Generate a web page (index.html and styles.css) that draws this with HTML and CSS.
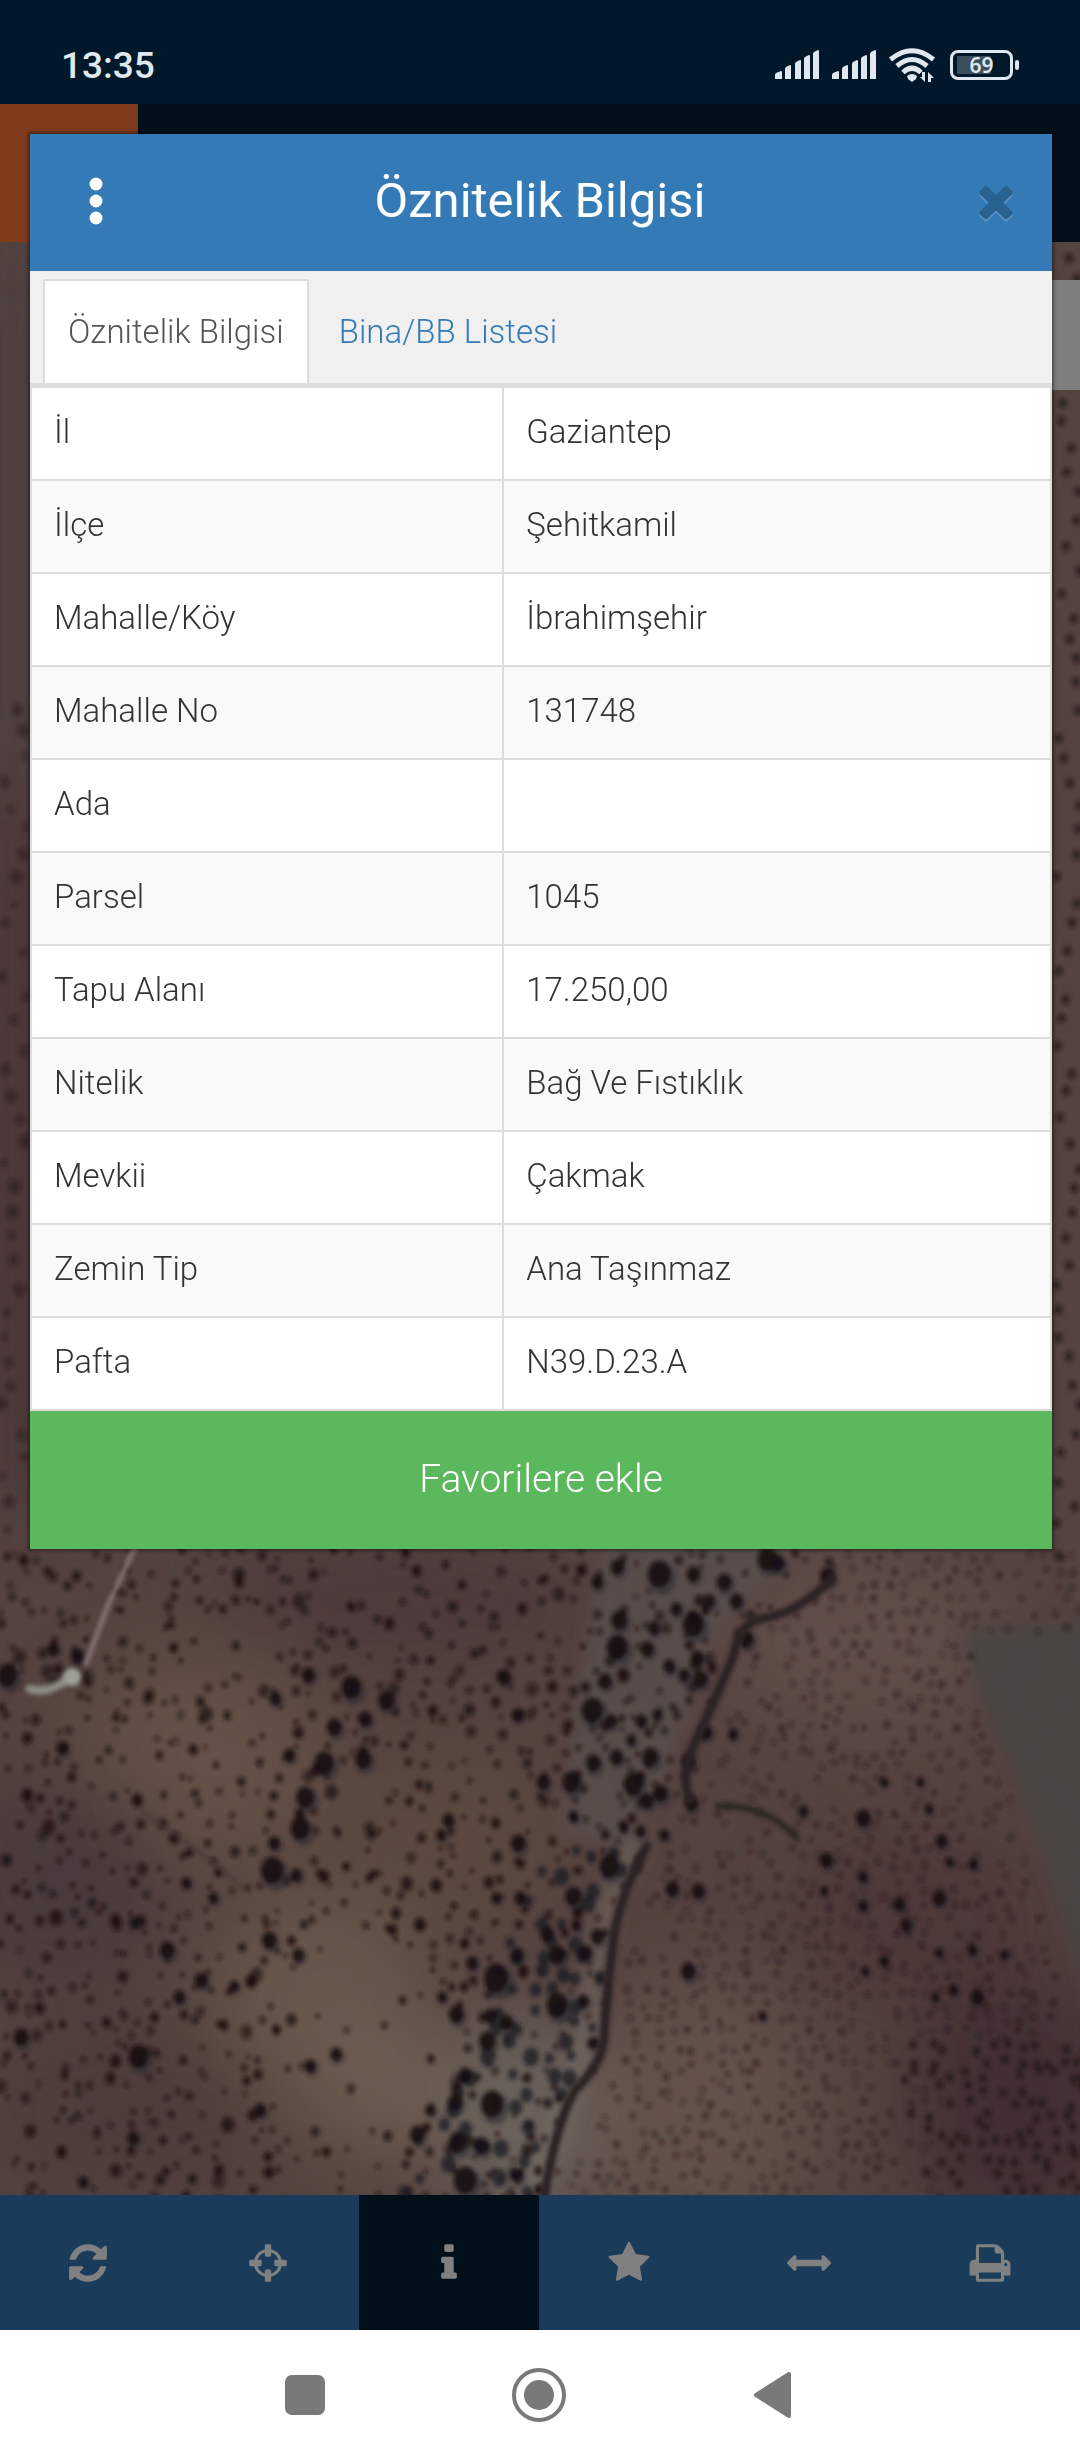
FILE: index.html
```html
<!DOCTYPE html>
<html lang="tr">
    <head>
        <meta charset="utf-8">
        <meta name="viewport" content="width=device-width, initial-scale=1">
        <title>Öznitelik Bilgisi</title>
        <link rel="stylesheet" href="styles.css">
    </head>

    <body>
        <div class="statusbar">
            <span class="clock">13:35</span>
            <div class="status-icons">
                <svg class="signal" viewBox="0 0 44 30">
                    <path d="M0 29v-4q0-1 1-2l5-2q1 0 1 1v7zM10 29V19q0-1 1-2l4-2q1 0 1 1v13zM20 29V14q0-1 1-2l4-2q1 0 1 1v18zM29 29V9q0-1 1-2l4-2q1 0 1 1v23zM38 29V4q0-1 1-2l4-2q1 0 1 1v28z" />
                </svg>
                <svg class="signal" viewBox="0 0 44 30">
                    <path d="M0 29v-4q0-1 1-2l5-2q1 0 1 1v7zM10 29V19q0-1 1-2l4-2q1 0 1 1v13zM20 29V14q0-1 1-2l4-2q1 0 1 1v18zM29 29V9q0-1 1-2l4-2q1 0 1 1v23zM38 29V4q0-1 1-2l4-2q1 0 1 1v28z" />
                </svg>
                <svg class="wifi" viewBox="0 0 46 36">
                    <g fill="none" stroke="#dfe8f0" stroke-width="5">
                        <path d="M1.500 12.500Q23-5 44.500 12.500" />
                        <path d="M8 19Q23 6 38 19" />
                        <path d="M14 25.500Q23 17 32 25.500" />
                    </g>
                    <path d="M18 29q5-4 10 0l-1 3-4 3-4-3zM36 25v10l-5-5h2v-5zM39 35V25l6 6h-3v4z" />
                </svg>
                <div class="battery"><span>69</span></div>
            </div>
        </div>

        <div class="app">
            <div class="topbar">
                <div class="logo"></div>
            </div>

            <svg class="map" viewBox="0 242 1080 1953" preserveAspectRatio="xMidYMax slice">
                <defs>
                    <filter id="haze" x="-50%" y="-50%" width="200%" height="200%">
                        <feGaussianBlur stdDeviation="40" />
                    </filter>
                    <filter id="soft">
                        <feGaussianBlur stdDeviation="2" />
                    </filter>
                    <filter id="softer">
                        <feGaussianBlur stdDeviation="8" />
                    </filter>
                </defs>
                <rect y="242" width="1080" height="1953" fill="#54433f" />
                <g filter="url(#haze)">
                    <rect y="242" width="60" height="550" fill="#473d3c" />
                    <rect y="800" width="60" height="700" fill="#452f31" />
                    <ellipse cx="200" cy="1760" rx="130" ry="100" fill="#655147" />
                    <ellipse cx="320" cy="2000" rx="110" ry="110" fill="#66564c" />
                    <ellipse cx="380" cy="2080" rx="70" ry="80" fill="#6c5b50" />
                    <ellipse cx="60" cy="1880" rx="110" ry="110" fill="#483a3b" />
                    <ellipse cx="400" cy="1600" rx="190" ry="60" fill="#4d3a3a" />
                    <ellipse cx="450" cy="1840" rx="110" ry="80" fill="#5c4841" />
                    <ellipse cx="120" cy="2110" rx="150" ry="90" fill="#4d3c3b" />
                    <ellipse cx="520" cy="2120" rx="80" ry="110" fill="#6a625b" />
                    <ellipse cx="860" cy="1640" rx="140" ry="90" fill="#604d48" />
                    <ellipse cx="700" cy="2110" rx="110" ry="130" fill="#63514c" />
                    <ellipse cx="920" cy="1920" rx="130" ry="90" fill="#4d3738" />
                    <ellipse cx="1020" cy="2110" rx="110" ry="130" fill="#422f32" />
                </g>
                <g filter="url(#softer)">
                    <path d="M960 1630L1100 1620V2030L1066 1930 1040 1850 1008 1760 980 1700z" fill="#484341" opacity=".8" />
                    <path d="M640 1840Q600 1900 590 2000 585 2070 530 2200" fill="none" stroke="#77706a" stroke-width="22" opacity=".5" />
                    <path d="M600 1545H800L720 1625 660 1790 620 1850 560 1830z" fill="#59514e" opacity=".7" />
                </g>
                <g id="trees" filter="url(#soft)"></g>
                <g filter="url(#soft)" fill="none" stroke-linecap="round">
                    <path d="M136 1545L108 1605 86 1664" stroke="#857573" stroke-width="5" />
                    <path d="M30 1689Q50 1695 70 1677" stroke="#8c8a82" stroke-width="9" />
                    <circle cx="72" cy="1677" r="9" fill="#9ea097" />
                    <path d="M832 1578Q800 1612 765 1618 738 1622 734 1655 715 1700 694 1745 680 1775 690 1800" stroke="#2c2122" stroke-width="9" />
                    <path d="M647 1846Q622 1890 614 1935 606 2000 604 2040 601 2065 575 2090 555 2125 544 2200" stroke="#2b2022" stroke-width="9" />
                    <path d="M718 1806Q765 1804 797 1838" stroke="#2c2524" stroke-width="6" />
                    <path d="M140 1810Q200 1850 245 1890" stroke="#463737" stroke-width="3" />
                </g>
            </svg>

            <div class="side-panel"></div>

            <nav class="toolbar">
                <button type="button" aria-label="Yenile">
                    <svg viewBox="0 0 1792 1792"><path d="M1639 1056q0 5-1 7-64 268-268 434.500t-478 166.500q-146 0-282.500-55t-243.500-157l-129 129q-19 19-45 19t-45-19-19-45v-448q0-26 19-45t45-19h448q26 0 45 19t19 45-19 45l-137 137q71 66 161 102t187 36q134 0 250-65t186-179q11-17 53-117 8-23 30-23h192q13 0 22.500 9.500t9.500 22.500zm25-800v448q0 26-19 45t-45 19h-448q-26 0-45-19t-19-45 19-45l138-138q-148-137-349-137-134 0-250 65t-186 179q-11 17-53 117-8 23-30 23h-199q-13 0-22.500-9.500t-9.500-22.500v-7q65-268 270-434.500t480-166.500q146 0 284 55.500t245 156.500l130-129q19-19 45-19t45 19 19 45z" /></svg>
                </button>
                <button type="button" aria-label="Konum">
                    <svg viewBox="0 0 1792 1792"><path d="M1325 1024h-109q-26 0-45-19t-19-45v-128q0-26 19-45t45-19h109q-32-108-112.500-188.500t-188.500-112.500v109q0 26-19 45t-45 19h-128q-26 0-45-19t-19-45v-109q-108 32-188.500 112.500t-112.500 188.500h109q26 0 45 19t19 45v128q0 26-19 45t-45 19h-109q32 108 112.500 188.500t188.500 112.500v-109q0-26 19-45t45-19h128q26 0 45 19t19 45v109q108-32 188.500-112.500t112.500-188.500zm339-192v128q0 26-19 45t-45 19h-143q-37 161-154.500 278.500t-278.500 154.500v143q0 26-19 45t-45 19h-128q-26 0-45-19t-19-45v-143q-161-37-278.500-154.500t-154.500-278.500h-143q-26 0-45-19t-19-45v-128q0-26 19-45t45-19h143q37-161 154.500-278.500t278.500-154.500v-143q0-26 19-45t45-19h128q26 0 45 19t19 45v143q161 37 278.500 154.500t154.500 278.500h143q26 0 45 19t19 45z" /></svg>
                </button>
                <button type="button" class="active" aria-label="Bilgi">
                    <svg viewBox="0 0 1792 1792"><path d="M1216 1344v128q0 26-19 45t-45 19h-512q-26 0-45-19t-19-45v-128q0-26 19-45t45-19h64v-384h-64q-26 0-45-19t-19-45v-128q0-26 19-45t45-19h384q26 0 45 19t19 45v576h64q26 0 45 19t19 45zm-128-1152v192q0 26-19 45t-45 19h-256q-26 0-45-19t-19-45v-192q0-26 19-45t45-19h256q26 0 45 19t19 45z" /></svg>
                </button>
                <button type="button" aria-label="Favoriler">
                    <svg viewBox="0 0 1792 1792"><path d="M1728 647q0 22-26 48l-363 354 86 500q1 7 1 20 0 21-10.500 35.500t-30.500 14.500q-19 0-40-12l-449-236-449 236q-22 12-40 12-21 0-31.500-14.500t-10.500-35.500q0-6 2-20l86-500-364-354q-25-27-25-48 0-37 56-46l502-73 225-455q19-41 49-41t49 41l225 455 502 73q56 9 56 46z" /></svg>
                </button>
                <button type="button" aria-label="Ölçüm">
                    <svg viewBox="0 0 1792 1792"><path d="M1792 896q0 26-19 45l-256 256q-19 19-45 19t-45-19-19-45v-128h-1024v128q0 26-19 45t-45 19-45-19l-256-256q-19-19-19-45t19-45l256-256q19-19 45-19t45 19 19 45v128h1024v-128q0-26 19-45t45-19 45 19l256 256q19 19 19 45z" /></svg>
                </button>
                <button type="button" aria-label="Yazdır">
                    <svg viewBox="0 0 1792 1792"><path d="M448 1536h896v-256h-896v256zm0-640h896v-384h-160q-40 0-68-28t-28-68v-160h-640v640zm1152 64q0-26-19-45t-45-19-45 19-19 45 19 45 45 19 45-19 19-45zm128 0v416q0 13-9.500 22.500t-22.500 9.500h-224v160q0 40-28 68t-68 28h-960q-40 0-68-28t-28-68v-160h-224q-13 0-22.500-9.500t-9.500-22.500v-416q0-79 56.500-135.500t135.500-56.500h64v-544q0-40 28-68t68-28h672q40 0 88 20t76 48l152 152q28 28 48 76t20 88v256h64q79 0 135.500 56.500t56.500 135.500z" /></svg>
                </button>
            </nav>

            <div class="modal" role="dialog" aria-labelledby="modal-title">
                <header class="modal-header">
                    <button type="button" class="menu" aria-label="Menü">
                        <svg viewBox="0 0 14 48"><circle cx="7" cy="7" r="6.500" /><circle cx="7" cy="24" r="6.500" /><circle cx="7" cy="41" r="6.500" /></svg>
                    </button>
                    <h1 id="modal-title">Öznitelik Bilgisi</h1>
                    <button type="button" class="close" aria-label="Kapat">
                        <svg viewBox="0 0 1792 1792"><path d="M1490 1322q0 40-28 68l-136 136q-28 28-68 28t-68-28l-294-294-294 294q-28 28-68 28t-68-28l-136-136q-28-28-28-68t28-68l294-294-294-294q-28-28-28-68t28-68l136-136q28-28 68-28t68 28l294 294 294-294q28-28 68-28t68 28l136 136q28 28 28 68t-28 68l-294 294 294 294q28 28 28 68z" /></svg>
                    </button>
                </header>
                <div class="tabs">
                    <a href="#oznitelik" class="tab active">Öznitelik Bilgisi</a>
                    <a href="#bina" class="tab">Bina/BB Listesi</a>
                </div>
                <table class="info" id="oznitelik">
                    <tr><th scope="row">İl</th><td>Gaziantep</td></tr>
                    <tr><th scope="row">İlçe</th><td>Şehitkamil</td></tr>
                    <tr><th scope="row">Mahalle/Köy</th><td>İbrahimşehir</td></tr>
                    <tr><th scope="row">Mahalle No</th><td>131748</td></tr>
                    <tr><th scope="row">Ada</th><td></td></tr>
                    <tr><th scope="row">Parsel</th><td>1045</td></tr>
                    <tr><th scope="row">Tapu Alanı</th><td>17.250,00</td></tr>
                    <tr><th scope="row">Nitelik</th><td>Bağ Ve Fıstıklık</td></tr>
                    <tr><th scope="row">Mevkii</th><td>Çakmak</td></tr>
                    <tr><th scope="row">Zemin Tip</th><td>Ana Taşınmaz</td></tr>
                    <tr><th scope="row">Pafta</th><td>N39.D.23.A</td></tr>
                </table>
                <button type="button" class="favorite">Favorilere ekle</button>
            </div>
        </div>

        <div class="navbar">
            <button type="button" aria-label="Son uygulamalar">
                <svg viewBox="0 0 56 56"><rect x="8" y="8" width="40" height="40" rx="7" /></svg>
            </button>
            <button type="button" aria-label="Ana ekran">
                <svg viewBox="0 0 56 56"><circle cx="28" cy="28" r="15" /><circle cx="28" cy="28" r="25" fill="none" stroke="#797979" stroke-width="4" /></svg>
            </button>
            <button type="button" aria-label="Geri">
                <svg viewBox="0 0 56 56"><path d="M11 28L44 7V49z" stroke="#797979" stroke-width="4" stroke-linejoin="round" /></svg>
            </button>
        </div>

        <script src="map.js"></script>
    </body>
</html>
```

FILE: styles.css
```css
* {
    box-sizing: border-box;
}

body {
    margin: 0;
    min-height: 100vh;
    display: flex;
    flex-direction: column;
    font-family: Roboto, "Noto Sans", sans-serif;
    font-weight: 300;
    font-size: 33px;
    color: #333;
    background-color: #fff;
}

button {
    display: flex;
    align-items: center;
    justify-content: center;
    padding: 0;
    border: none;
    background: none;
    font: inherit;
    cursor: pointer;
}

/* phone status bar */
.statusbar {
    display: flex;
    justify-content: space-between;
    align-items: center;
    height: 104px;
    padding: 26px 61px 0 61px;
    background-color: #00182a;
}

.clock {
    color: #dfe8f0;
    font-size: 37px;
    font-weight: 500;
}

.status-icons {
    display: flex;
    align-items: center;
    gap: 13px;
}

.status-icons svg {
    fill: #dfe8f0;
}

.signal {
    width: 44px;
    height: 30px;
}

.wifi {
    width: 46px;
    height: 36px;
}

.battery {
    position: relative;
    width: 63px;
    height: 30px;
    margin: 0 6px 0 2px;
    border: 3px solid #dfe8f0;
    border-radius: 8px;
    background: linear-gradient(#3c4d5c, #3c4d5c) 4px 3px / 34px 18px no-repeat;
    color: #dfe8f0;
    font-family: "Noto Sans", sans-serif;
    font-size: 21px;
    font-weight: 600;
    line-height: 24px;
    text-align: center;
}

.battery::after {
    content: "";
    position: absolute;
    top: 7px;
    right: -9px;
    width: 4px;
    height: 10px;
    border-radius: 2px;
    background-color: #dfe8f0;
}

/* map application */
.app {
    position: relative;
    flex: 1;
    display: flex;
    flex-direction: column;
    overflow: hidden;
}

.topbar {
    height: 138px;
    background-color: #000f1a;
}

.logo {
    width: 138px;
    height: 138px;
    background-color: #7f3a1b;
}

.map {
    display: block;
    flex: 1;
    width: 100%;
    min-height: 0;
}

.side-panel {
    position: absolute;
    top: 176px;
    right: 0;
    width: 60px;
    height: 110px;
    background-color: #7f7f7f;
}

.toolbar {
    display: flex;
    height: 135px;
    margin-left: -2px;
    background-color: #1a3c5a;
}

.toolbar button {
    flex: 1;
}

.toolbar .active {
    background-color: #000f1a;
}

.toolbar svg {
    width: 44px;
    height: 44px;
    fill: #808080;
}

/* attribute window */
.modal {
    position: absolute;
    top: 30px;
    left: 30px;
    right: 28px;
    background-color: #fff;
    box-shadow: 0 0 3px 2px rgba(0, 0, 0, 0.4);
}

.modal-header {
    display: flex;
    align-items: center;
    height: 137px;
    padding: 0 31px 4px 41px;
    background-color: #337ab7;
    color: #fff;
}

.modal-header h1 {
    flex: 1;
    margin: 0;
    padding-right: 12px;
    font-size: 49px;
    font-weight: 400;
    text-align: center;
}

.menu {
    width: 50px;
    height: 50px;
}

.menu svg {
    width: 14px;
    height: 48px;
    fill: #fff;
}

.close svg {
    width: 50px;
    height: 50px;
    fill: #29628f;
    filter: drop-shadow(0 2px 0 #5c95c5);
}

.tabs {
    display: flex;
    height: 115px;
    padding: 8px 13px 0;
    border-bottom: 3px solid #ddd;
    background-color: #f0f0f0;
}

.tab {
    display: flex;
    align-items: center;
    margin-right: 5px;
    padding: 0 23px 2px;
    border: 2px solid transparent;
    border-bottom: none;
    color: #337ab7;
    text-decoration: none;
}

.tab.active {
    border-color: #ddd;
    background-color: #fff;
    color: #555;
}

.info {
    width: 100%;
    border-collapse: collapse;
    table-layout: fixed;
}

.info th,
.info td {
    height: 93px;
    padding: 0 22px 4px;
    border: 2px solid #ddd;
    font-weight: 300;
    text-align: left;
}

.info th {
    width: 46.3%;
}

.info tr:nth-child(even) {
    background-color: #f9f9f9;
}

.favorite {
    width: 100%;
    height: 138px;
    padding-bottom: 2px;
    background-color: #5cb85c;
    color: #fff;
    font-size: 39px;
}

/* phone navigation */
.navbar {
    display: flex;
    align-items: center;
    justify-content: center;
    gap: 178px;
    height: 130px;
    padding-right: 2px;
    background-color: #fff;
}

.navbar svg {
    display: block;
    width: 56px;
    height: 56px;
    fill: #797979;
}
```

FILE: map.js
```js
// Trees of the aerial view, in map coordinates
var trees = document.getElementById("trees");
var seed = 1045;

function random() {
    seed = (seed * 16807) % 2147483647;
    return seed / 2147483647;
}

function addTree(x, y, r, color, opacity) {
    var tree = document.createElementNS("http://www.w3.org/2000/svg", "ellipse");
    tree.setAttribute("cx", x);
    tree.setAttribute("cy", y);
    tree.setAttribute("rx", r);
    tree.setAttribute("ry", r * 1.2);
    tree.setAttribute("fill", color);
    tree.setAttribute("opacity", opacity);
    trees.appendChild(tree);
}

// x of the dark field border for a given y
function borderX(y) {
    if (y < 1620) return 830 - (y - 1550) * 1.2;
    if (y < 1800) return 745 - (y - 1620) * 0.35;
    if (y < 1950) return 665 - (y - 1800) * 0.35;
    if (y < 2060) return 608;
    return 600 - (y - 2060) * 0.42;
}

// scattered orchard on the left
for (var y = 1548; y < 2200; y += 15) {
    for (var x = 0; x < borderX(y) - 10; x += 17) {
        var bare = Math.hypot((x - 350) / 95, (y - 2040) / 110) < 1;
        if (random() < (bare ? 0.12 : 0.56)) {
            addTree(x + random() * 16, y + random() * 14, 2 + random() * random() * 5, "#1d1010", 0.6 + random() * 0.35);
        }
    }
}

// planted rows on the right
for (y = 1552; y < 2200; y += 14) {
    for (x = borderX(y) + 18; x < 1080; x += 15) {
        var fallow = x > 965 + (y - 1640) * 0.26 && y > 1630 && y < 2020;
        if (!fallow && random() < 0.7) {
            var south = y > 2030 && x > 880 + random() * 60;
            addTree(x + random() * 10, y + random() * 10, south ? 3.8 : 2.2 + random(), "#241517", south ? 0.85 : 0.35 + random() * 0.35);
        }
    }
}

// strips beside the window
for (y = 250; y < 1550; y += 24) {
    addTree(1056 + random() * 24, y + random() * 10, 4, "#201214", 0.7);
    if (y > 700) {
        addTree(random() * 26, y + random() * 10, 2 + random() * 4, "#201214", 0.5);
    }
}

// thicket along the stream
for (y = 1850; y < 2195; y += 17) {
    for (x = borderX(y) - 100 - (y - 1850) * 0.12; x < borderX(y) - 12; x += 20) {
        if (random() < 0.55) {
            addTree(x + random() * 10, y + random() * 10, 4 + random() * 4, "#1c1c1f", 0.75);
        }
    }
}

// large single trees: x, y, radius
var large = [
    [7, 1675, 12], [53, 1649, 7], [77, 1656, 8], [351, 1687, 12], [386, 1700, 10],
    [365, 1719, 8], [334, 1727, 9], [324, 1763, 12], [363, 1759, 10], [289, 1755, 7],
    [305, 1797, 11], [300, 1828, 12], [272, 1870, 14], [274, 1843, 7], [296, 1875, 7],
    [308, 1675, 8], [275, 1698, 7], [167, 1950, 9], [269, 1940, 9], [298, 1955, 7],
    [201, 1980, 8], [179, 1997, 7], [234, 1986, 6], [138, 2056, 12], [260, 2110, 7],
    [133, 2138, 7], [336, 2054, 7], [310, 2066, 7], [504, 1677, 8], [517, 1715, 7],
    [518, 1843, 9], [448, 1820, 7], [441, 1835, 6], [496, 1898, 6], [520, 1898, 7],
    [186, 1883, 6], [213, 1898, 6], [134, 1923, 6], [62, 1748, 7], [496, 1978, 15],
    [472, 1963, 7], [517, 1955, 8], [456, 2014, 9], [442, 1997, 6], [491, 2016, 8],
    [506, 2022, 8], [487, 2041, 10], [465, 2075, 8], [492, 2104, 14], [455, 2102, 9],
    [458, 2142, 11], [482, 2146, 9], [430, 2110, 6], [465, 2180, 14], [417, 2134, 9],
    [517, 2176, 7], [83, 2182, 6], [21, 2037, 9], [617, 1567, 8], [659, 1574, 14],
    [693, 1574, 8], [724, 1582, 9], [597, 1582, 7], [619, 1620, 10], [617, 1647, 13],
    [647, 1649, 8], [654, 1628, 7], [676, 1609, 7], [693, 1624, 13], [709, 1601, 7],
    [736, 1601, 8], [697, 1658, 8], [669, 1666, 7], [700, 1679, 9], [684, 1675, 7],
    [605, 1681, 8], [592, 1710, 13], [611, 1721, 7], [641, 1721, 7], [657, 1715, 6],
    [631, 1740, 6], [593, 1763, 9], [616, 1757, 8], [650, 1757, 10], [571, 1782, 11],
    [543, 1782, 8], [633, 1784, 12], [660, 1793, 9], [647, 1801, 8], [746, 1639, 9],
    [767, 1559, 12], [777, 1563, 9], [827, 1576, 9], [688, 1761, 8], [705, 1732, 8],
    [733, 1734, 6], [691, 1803, 8], [623, 1826, 6], [640, 1831, 6], [664, 1835, 6],
    [573, 1816, 6], [609, 1866, 12], [573, 1896, 10], [547, 1934, 8], [576, 1925, 6],
    [597, 1936, 8], [557, 1955, 10], [585, 1953, 8], [557, 2005, 13], [583, 2001, 7],
    [592, 2043, 6], [672, 1889, 8], [698, 1891, 8], [688, 1971, 9], [762, 2016, 5],
    [863, 1818, 9], [803, 1811, 6], [941, 1841, 7], [949, 1862, 5], [973, 1864, 6],
    [939, 1898, 8], [899, 1904, 7], [906, 1925, 7], [863, 1906, 6], [863, 1877, 6],
    [826, 1860, 8], [824, 1891, 5], [884, 1961, 6], [865, 1971, 5], [939, 1953, 5],
    [972, 1950, 6], [1004, 1955, 5], [953, 1990, 6], [977, 1997, 8], [935, 1997, 5],
    [884, 1782, 5], [920, 1782, 5], [929, 1809, 5]
];

// each crown has a soft shadow to its lower right
large.forEach(function (tree) {
    var r = tree[2] * 0.8;
    addTree(tree[0] + r * 0.3, tree[1] + r * 0.4, r * 1.2, "#25262a", 0.5);
    addTree(tree[0], tree[1], r, "#150e10", 0.85);
});
```
